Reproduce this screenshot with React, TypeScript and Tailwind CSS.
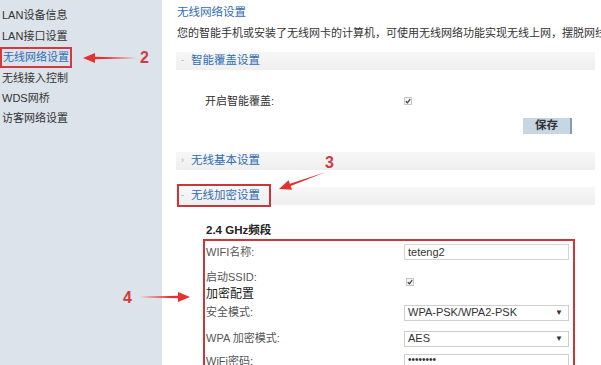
import React from "react";

const font = { fontFamily: '"Liberation Sans", Arial, "Noto Sans CJK SC", sans-serif' };

function Check() {
  return (
    <div className="w-[8px] h-[8px] border border-[#c8c8c8] bg-[#f4f4f4] flex items-center justify-center">
      <svg width="6" height="6" viewBox="0 0 6 6">
        <path d="M0.8 3.2 L2.4 4.8 L5.2 1.2" stroke="#444" strokeWidth="1.3" fill="none" />
      </svg>
    </div>
  );
}

function SectionBar({ label, sign }: { label: string; sign: string }) {
  return (
    <div className="h-[18px] w-[419px] bg-gradient-to-b from-[#f7f7f7] to-[#efefef] flex items-center text-[11.5px]">
      <span className="text-[#aaa] text-[9px] ml-[5px] w-[10px]">{sign}</span>
      <span className="text-[#2f6db3]">{label}</span>
    </div>
  );
}

function Arrow({ className, rot, len }: { className: string; rot: number; len: number }) {
  return (
    <div className={"absolute origin-left " + className} style={{ transform: `rotate(${rot}deg)` }}>
      <svg width={len} height="12" viewBox={`0 0 ${len} 12`}>
        <path d={`M0 6 L${len - 12} 4.8 L${len - 12} 1 L${len} 6 L${len - 12} 11 L${len - 12} 7.2 Z`} fill="#e5312f" />
      </svg>
    </div>
  );
}

export default function App() {
  return (
    <div className="relative w-[601px] h-[365px] overflow-hidden bg-white flex" style={font}>
      {/* Sidebar */}
      <div className="w-[162px] shrink-0 bg-[#dde3ea] pt-[5px] text-[11px] text-[#333] whitespace-nowrap">
        <div className="h-[21px] leading-[21px] pl-[2px]">LAN设备信息</div>
        <div className="h-[21px] leading-[21px] pl-[2px]">LAN接口设置</div>
        <div className="h-[21px] w-[72px] leading-[17px] pl-[1px] border-2 border-[#d23a3f] text-[#2f6db3]">无线网络设置</div>
        <div className="h-[20px] leading-[20px] pl-[2px]">无线接入控制</div>
        <div className="h-[20px] leading-[20px] pl-[2px]">WDS网桥</div>
        <div className="h-[20px] leading-[20px] pl-[2px]">访客网络设置</div>
      </div>

      {/* Content */}
      <div className="flex-1 pl-[14px] text-[11px]">
        <div className="h-[24px] leading-[24px] pl-[1px] text-[11.5px] text-[#2f6db3]">无线网络设置</div>
        <div className="h-[18px] leading-[18px] pl-[1px] text-[#333] whitespace-nowrap">
          您的智能手机或安装了无线网卡的计算机，可使用无线网络功能实现无线上网，摆脱网线的
        </div>
        <div className="mt-[10px]">
          <SectionBar label="智能覆盖设置" sign="-" />
        </div>
        <div className="mt-[21px] h-[20px] flex items-center">
          <span className="ml-[29px] w-[199px] text-[#333]">开启智能覆盖:</span>
          <Check />
        </div>
        <div className="mt-[7px] h-[16px] flex">
          <div className="ml-[347px] w-[49px] h-[16px] bg-[#c7d6e3] border-r-2 border-[#8a9aa8] flex items-center justify-center text-[11.5px] font-bold text-[#333]">
            保存
          </div>
        </div>
        <div className="mt-[18px]">
          <SectionBar label="无线基本设置" sign="›" />
        </div>
        <div className="mt-[17px] relative">
          <SectionBar label="无线加密设置" sign="-" />
          <div className="absolute left-[1px] top-[-3px] w-[94px] h-[23px] border-2 border-[#c9373d]" />
        </div>
        <div className="mt-[16px] h-[18px] leading-[18px] pl-[30px] font-bold text-[11.5px] text-[#222]">2.4 GHz频段</div>
        <div className="ml-[27px] w-[372px] h-[140px] border-2 border-b-0 border-[#c9373d] pt-[2px] text-[#555]">
          <div className="h-[18px] flex items-center">
            <span className="ml-[1px] w-[198px]">WIFI名称:</span>
            <div className="w-[165px] h-[16px] border border-[#d4d4d4] bg-white flex items-center pl-[3px] text-[#333]">teteng2</div>
          </div>
          <div className="h-[24px] flex items-end">
            <span className="ml-[1px] w-[200px]">启动SSID:</span>
            <div className="mb-[-1px]"><Check /></div>
          </div>
          <div className="h-[18px] leading-[18px] ml-[1px] text-[12px] text-[#222]">加密配置</div>
          <div className="mt-[1px] h-[17px] flex items-center">
            <span className="ml-[1px] w-[198px]">安全模式:</span>
            <div className="w-[165px] h-[16px] border border-[#cfcfcf] bg-white flex items-center justify-between pl-[3px] pr-[5px] text-[#333]">
              <span>WPA-PSK/WPA2-PSK</span>
              <span className="text-[8px]">▼</span>
            </div>
          </div>
          <div className="mt-[9px] h-[17px] flex items-center">
            <span className="ml-[1px] w-[198px]">WPA 加密模式:</span>
            <div className="w-[165px] h-[16px] border border-[#cfcfcf] bg-white flex items-center justify-between pl-[3px] pr-[5px] text-[#333]">
              <span>AES</span>
              <span className="text-[8px]">▼</span>
            </div>
          </div>
          <div className="mt-[6px] h-[17px] flex items-center">
            <span className="ml-[1px] w-[198px]">WiFi密码:</span>
            <div className="w-[165px] h-[16px] border border-[#cfcfcf] bg-white flex items-start pl-[3px] text-[#333] leading-[10px] text-[10px]">••••••••</div>
          </div>
        </div>
      </div>

      {/* Annotations */}
      <Arrow className="left-[137px] top-[52px]" rot={180} len={54} />
      <div className="absolute left-[140px] top-[48px] text-[16px] text-[#d23a3f] font-bold leading-[20px]">2</div>

      <Arrow className="left-[326px] top-[166px]" rot={160} len={50} />
      <div className="absolute left-[325px] top-[153px] text-[16px] text-[#d23a3f] font-bold leading-[20px]">3</div>

      <Arrow className="left-[139px] top-[291px]" rot={0} len={51} />
      <div className="absolute left-[123px] top-[288px] text-[16px] text-[#d23a3f] font-bold leading-[20px]">4</div>
    </div>
  );
}
